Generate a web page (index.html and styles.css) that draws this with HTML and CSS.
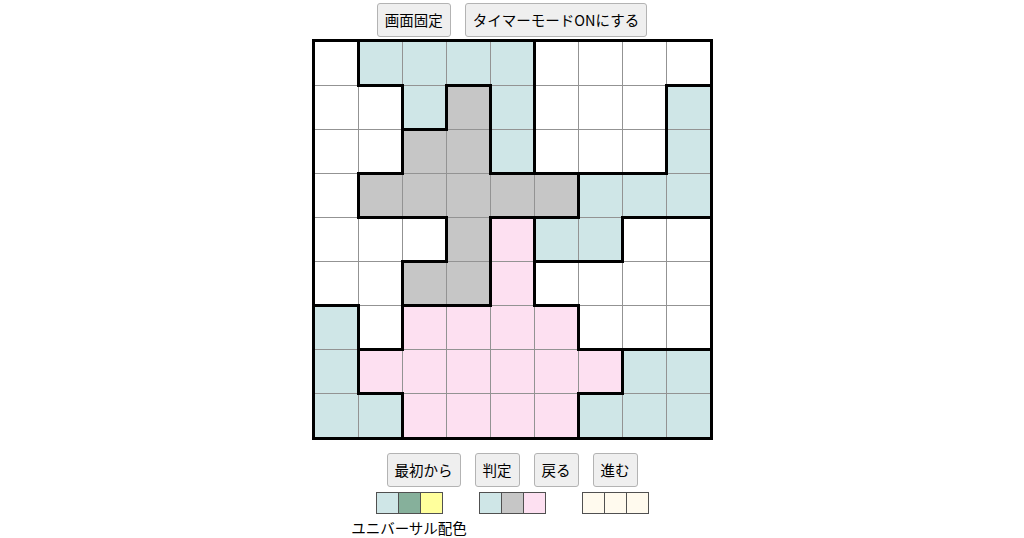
FILE: index.html
```html
<!DOCTYPE html>
<html lang="ja">
<head>
<meta charset="utf-8">
<title>パズル</title>
<link rel="stylesheet" href="styles.css">
</head>
<body>
<div class="page">
  <div class="bar bar-top">
    <button class="btn">画面固定</button>
    <button class="btn">タイマーモードONにする</button>
  </div>

  <div class="board">
    <!-- row 0 -->
    <div class="cell er"></div>
    <div class="cell sky eb"></div>
    <div class="cell sky"></div>
    <div class="cell sky eb"></div>
    <div class="cell sky er"></div>
    <div class="cell"></div>
    <div class="cell"></div>
    <div class="cell"></div>
    <div class="cell eb"></div>
    <!-- row 1 -->
    <div class="cell"></div>
    <div class="cell er"></div>
    <div class="cell sky er eb"></div>
    <div class="cell gray er"></div>
    <div class="cell sky er"></div>
    <div class="cell"></div>
    <div class="cell"></div>
    <div class="cell er"></div>
    <div class="cell sky"></div>
    <!-- row 2 -->
    <div class="cell"></div>
    <div class="cell er eb"></div>
    <div class="cell gray"></div>
    <div class="cell gray er"></div>
    <div class="cell sky er eb"></div>
    <div class="cell eb"></div>
    <div class="cell eb"></div>
    <div class="cell er eb"></div>
    <div class="cell sky"></div>
    <!-- row 3 -->
    <div class="cell er"></div>
    <div class="cell gray eb"></div>
    <div class="cell gray eb"></div>
    <div class="cell gray"></div>
    <div class="cell gray eb"></div>
    <div class="cell gray er eb"></div>
    <div class="cell sky"></div>
    <div class="cell sky eb"></div>
    <div class="cell sky eb"></div>
    <!-- row 4 -->
    <div class="cell"></div>
    <div class="cell"></div>
    <div class="cell er eb"></div>
    <div class="cell gray er"></div>
    <div class="cell pink er"></div>
    <div class="cell sky eb"></div>
    <div class="cell sky er eb"></div>
    <div class="cell"></div>
    <div class="cell"></div>
    <!-- row 5 -->
    <div class="cell eb"></div>
    <div class="cell er"></div>
    <div class="cell gray eb"></div>
    <div class="cell gray er eb"></div>
    <div class="cell pink er"></div>
    <div class="cell eb"></div>
    <div class="cell"></div>
    <div class="cell"></div>
    <div class="cell"></div>
    <!-- row 6 -->
    <div class="cell sky er"></div>
    <div class="cell er eb"></div>
    <div class="cell pink"></div>
    <div class="cell pink"></div>
    <div class="cell pink"></div>
    <div class="cell pink er"></div>
    <div class="cell eb"></div>
    <div class="cell eb"></div>
    <div class="cell eb"></div>
    <!-- row 7 -->
    <div class="cell sky er"></div>
    <div class="cell pink eb"></div>
    <div class="cell pink"></div>
    <div class="cell pink"></div>
    <div class="cell pink"></div>
    <div class="cell pink"></div>
    <div class="cell pink er eb"></div>
    <div class="cell sky"></div>
    <div class="cell sky"></div>
    <!-- row 8 -->
    <div class="cell sky"></div>
    <div class="cell sky er"></div>
    <div class="cell pink"></div>
    <div class="cell pink"></div>
    <div class="cell pink"></div>
    <div class="cell pink er"></div>
    <div class="cell sky"></div>
    <div class="cell sky"></div>
    <div class="cell sky"></div>
  </div>

  <div class="bar bar-bottom">
    <button class="btn">最初から</button>
    <button class="btn">判定</button>
    <button class="btn">戻る</button>
    <button class="btn">進む</button>
  </div>

  <div class="palettes">
    <div class="palette">
      <div class="swatches">
        <span class="swatch sw-sky"></span>
        <span class="swatch sw-green"></span>
        <span class="swatch sw-yellow"></span>
      </div>
      <div class="pal-label">ユニバーサル配色</div>
    </div>
    <div class="palette">
      <div class="swatches">
        <span class="swatch sw-sky"></span>
        <span class="swatch sw-gray"></span>
        <span class="swatch sw-pink"></span>
      </div>
    </div>
    <div class="palette">
      <div class="swatches">
        <span class="swatch sw-cream"></span>
        <span class="swatch sw-cream"></span>
        <span class="swatch sw-cream"></span>
      </div>
    </div>
  </div>
</div>
</body>
</html>
```

FILE: styles.css
```css
html, body {
  margin: 0;
  padding: 0;
  background: #ffffff;
}

body {
  font-family: "Noto Sans CJK JP", "Noto Sans", sans-serif;
  color: #000;
  overflow: hidden;
}

.page {
  display: flex;
  flex-direction: column;
  align-items: center;
}

.bar {
  display: flex;
  justify-content: center;
}

.bar-top {
  gap: 14px;
  padding-top: 3px;
}

.bar-bottom {
  gap: 14px;
  margin-top: 13px;
}

.btn {
  font-family: "Noto Sans CJK JP", "Noto Sans", sans-serif;
  font-size: 14.5px;
  line-height: 20px;
  height: 34px;
  padding: 6px 7px;
  background: #efefef;
  border: 1px solid #b3b3b3;
  border-radius: 3px;
  color: #000;
  white-space: nowrap;
}

.board {
  margin-top: 2px;
  display: grid;
  grid-template-columns: repeat(9, 43px);
  grid-template-rows: repeat(9, 43px);
  gap: 1px;
  background: #939393;
  border: 3px solid #000;
}

.cell {
  position: relative;
  background: #ffffff;
}

.cell.sky { background: #cfe6e7; }
.cell.gray { background: #c6c6c6; }
.cell.pink { background: #fde0f1; }

.cell.er::before {
  content: "";
  position: absolute;
  top: -2px;
  bottom: -2px;
  right: -2px;
  width: 3px;
  background: #000;
  z-index: 1;
}

.cell.eb::after {
  content: "";
  position: absolute;
  left: -2px;
  right: -2px;
  bottom: -2px;
  height: 3px;
  background: #000;
  z-index: 1;
}

.palettes {
  display: flex;
  justify-content: center;
  align-items: flex-start;
  gap: 36px;
  margin-top: 5px;
}

.palette {
  display: flex;
  flex-direction: column;
  align-items: center;
}

.swatches {
  display: flex;
}

.swatch {
  display: block;
  box-sizing: border-box;
  width: 23px;
  height: 22px;
  border: 1px solid #505050;
}

.swatch + .swatch {
  width: 22px;
  border-left: none;
}

.sw-sky { background: #cfe6e7; }
.sw-green { background: #86b09b; }
.sw-yellow { background: #ffff9c; }
.sw-gray { background: #c6c6c6; }
.sw-pink { background: #fde0f1; }
.sw-cream { background: #fffaee; }

.pal-label {
  margin: 4px -30px 0;
  font-size: 14.5px;
  line-height: 20px;
  text-align: center;
  white-space: nowrap;
}
```
